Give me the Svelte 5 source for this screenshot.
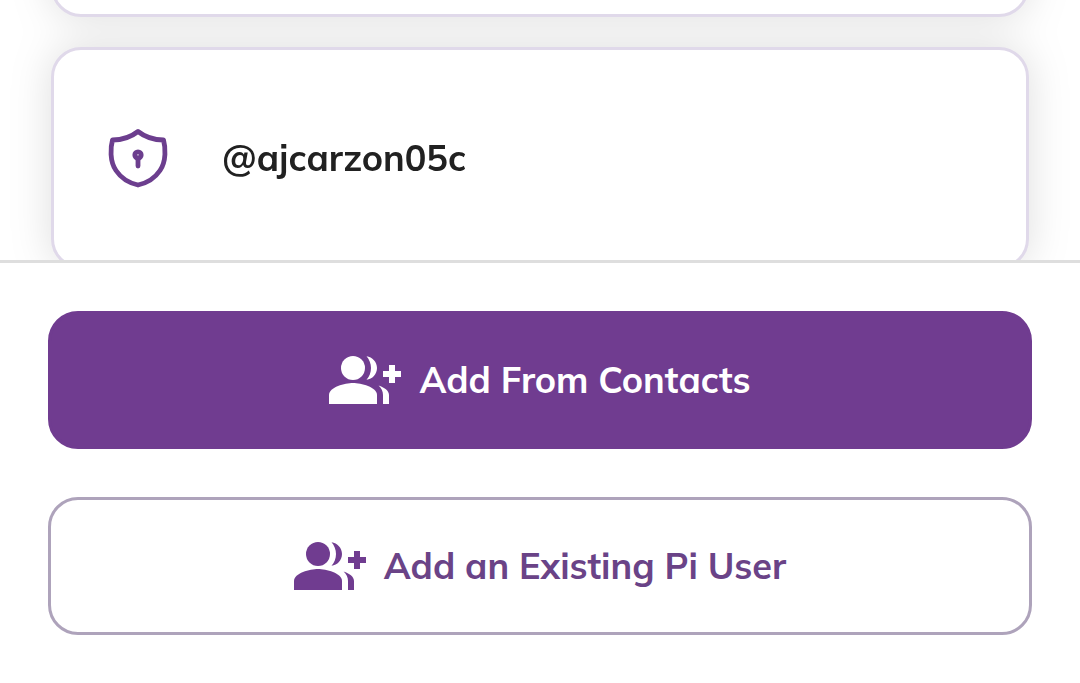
<script>
  const people = ['', '@ajcarzon05c'];
  const actions = [
    { label: 'Add From Contacts', kind: 'primary' },
    { label: 'Add an Existing Pi User', kind: 'outline' }
  ];
</script>

<div class="screen">
  <main>
    <ul>
      {#each people as name}
        <li>
          {#if name}
            <svg class="shield" viewBox="0 0 60 60" aria-hidden="true">
              <path d="M30 3.500C23 9 14 12 4.500 12C2.500 19 1.500 33 8 42.500C13 50 21 55 30 57C39 55 47 50 52 42.500C58.500 33 57.500 19 55.500 12C46 12 37 9 30 3.500Z" />
              <circle cx="30" cy="27" r="3.200" />
              <path d="M30 30V38" />
            </svg>
            <span>{name}</span>
          {/if}
        </li>
      {/each}
    </ul>
  </main>

  <footer>
    {#each actions as action}
      <button type="button" class={action.kind}>
        <svg class="group" viewBox="0 0 24 24" aria-hidden="true">
          <circle cx="8" cy="8" r="4" />
          <path d="M8 13c-2.670 0-8 1.340-8 4v3h16v-3c0-2.660-5.330-4-8-4z" />
          <path d="M12.510 4.050C13.430 5.110 14 6.490 14 8s-.57 2.890-1.490 3.950C14.470 11.700 16 10.040 16 8s-1.530-3.700-3.490-3.950zM16.530 13.830C17.420 14.660 18 15.700 18 17v3h2v-3c0-1.450-1.590-2.510-3.470-3.170z" />
          <path d="M22 9V7h-2v2h-2v2h2v2h2v-2h2V9z" />
        </svg>
        <span>{action.label}</span>
      </button>
    {/each}
  </footer>
</div>

<style>
  :global(body) {
    background: #fff;
  }

  .screen {
    display: flex;
    flex-direction: column;
    height: 100vh;
    font-family: Mulish, Muli, 'Open Sans', 'Noto Sans', sans-serif;
    font-size: 36px;
    font-weight: 700;
    line-height: 48px;
  }

  main {
    flex: 1;
    min-height: 0;
    display: flex;
    flex-direction: column;
    justify-content: flex-end;
    overflow: hidden;
  }

  ul {
    display: flex;
    flex-direction: column;
    gap: 30px;
    margin: 0 51px -9px;
    padding: 0;
    list-style: none;
    filter: drop-shadow(0 0 20px rgba(0, 0, 0, 0.13));
  }

  li {
    display: flex;
    align-items: center;
    gap: 54px;
    box-sizing: border-box;
    min-height: 222px;
    padding: 0 54px;
    border: 3px solid #e0d9ea;
    border-radius: 30px;
    background: #fff;
    color: #212121;
  }

  .shield {
    width: 60px;
    height: 60px;
    fill: none;
    stroke: #6c3e8e;
    stroke-width: 4.800;
    stroke-linecap: round;
    stroke-linejoin: round;
  }

  footer {
    display: flex;
    flex-direction: column;
    gap: 48px;
    padding: 48px;
    border-top: 3px solid #dedede;
    background: #fff;
  }

  button {
    display: flex;
    align-items: center;
    justify-content: center;
    gap: 18px;
    min-height: 138px;
    padding: 0 24px;
    border: 3px solid #703c90;
    border-radius: 30px;
    font: inherit;
    cursor: pointer;
  }

  .primary {
    background: #703c90;
    color: #fff;
  }

  .outline {
    border-color: #aea3bb;
    background: #fff;
    color: #6a4387;
  }

  .group {
    width: 72px;
    height: 72px;
    fill: #fff;
  }

  .outline .group {
    fill: #703c90;
  }
</style>
